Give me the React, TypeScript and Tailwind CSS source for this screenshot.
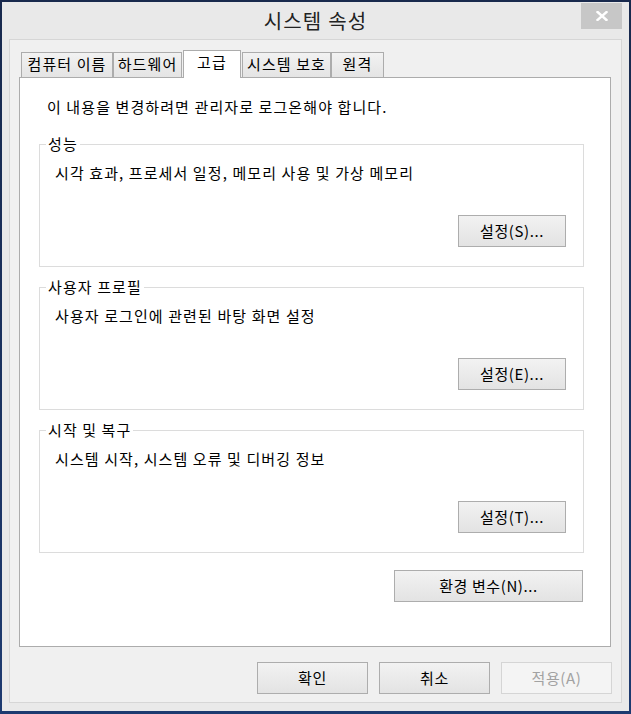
import React from "react";

function Btn({ label, w, disabled }: { label: string; w: string; disabled?: boolean }) {
  return (
    <button
      className={
        disabled
          ? `${w} h-[32px] border border-[#d5d5d5] bg-[#f4f4f4] text-[#a2a2a2] text-[15px] leading-[20px] tracking-[0.6px] flex items-center justify-center`
          : `${w} h-[32px] border border-[#adadad] bg-linear-to-b from-[#f2f2f2] to-[#e3e3e3] text-black text-[15px] leading-[20px] tracking-[0.6px] flex items-center justify-center`
      }
    >
      {label}
    </button>
  );
}

function Group({ title, text, button, className }: { title: string; text: string; button: string; className: string }) {
  return (
    <div className={`${className} w-[545px] h-[123px] border border-[#dcdcdc] flex flex-col`}>
      <div className="-mt-[11px] ml-[6px] w-fit bg-white px-[2px] h-[20px] leading-[20px] text-[15px] tracking-[1.1px]">{title}</div>
      <div className="mt-[9px] ml-[15px] h-[20px] leading-[20px] text-[15px] tracking-[1.1px]">{text}</div>
      <div className="mt-[32px] mr-[17px] self-end">
        <Btn label={button} w="w-[108px]" />
      </div>
    </div>
  );
}

export default function App() {
  const tabBase =
    "h-[25px] border-t border-l border-r border-[#acacac] bg-linear-to-b from-[#f2f2f2] to-[#e4e4e4] text-[15px] leading-[22px] tracking-[1.1px] flex justify-center text-black";
  return (
    <div className="w-[631px] h-[714px] bg-linear-to-b from-[#18294d] to-[#1d3a70] pt-[2px] pl-[2px] overflow-hidden font-['Noto_Sans_CJK_KR','Noto_Sans',sans-serif]">
      <div className="w-[627px] h-[709px] bg-[#e9e9e9] flex flex-col px-[7px]">
        {/* title bar */}
        <div className="h-[37px] grid grid-cols-[1fr_auto_1fr]">
          <div />
          <div className="text-[20px] leading-[38px] tracking-[1.2px] text-[#222222]">시스템 속성</div>
          <div className="justify-self-end pt-[1px]">
            <div className="w-[41px] h-[26px] bg-[#c7c7c7] flex items-center justify-center">
              <svg width="12" height="10" viewBox="0 0 12 10">
                <path d="M1.5 1 L10.5 9 M10.5 1 L1.5 9" stroke="#ffffff" strokeWidth="2.4" strokeLinecap="square" />
              </svg>
            </div>
          </div>
        </div>
        {/* client */}
        <div className="h-[664px] border border-[#d6d6d6] bg-[#f0f0f0] px-[9px] pt-[10px] flex flex-col">
          {/* tabs */}
          <div className="h-[27px] flex items-end">
            <div className={`${tabBase} ml-[2px] w-[92px]`}>컴퓨터 이름</div>
            <div className={`${tabBase} w-[69px]`}>하드웨어</div>
            <div className="ml-[1px] w-[58px] h-[28px] -mb-px relative z-10 border-t border-l border-r border-[#acacac] bg-white text-[15px] leading-[22px] tracking-[1.1px] flex justify-center">
              고급
            </div>
            <div className={`${tabBase} ml-[1px] w-[89px]`}>시스템 보호</div>
            <div className={`${tabBase} w-[53px]`}>원격</div>
          </div>
          {/* pane */}
          <div className="w-[592px] h-[570px] border border-[#acacac] bg-white pl-[19px] flex flex-col text-black">
            <div className="mt-[19px] ml-[8px] h-[20px] leading-[20px] text-[15px] tracking-[1.1px]">
              이 내용을 변경하려면 관리자로 로그온해야 합니다.
            </div>
            <Group className="mt-[27px]" title="성능" text="시각 효과, 프로세서 일정, 메모리 사용 및 가상 메모리" button="설정(S)..." />
            <Group className="mt-[20px]" title="사용자 프로필" text="사용자 로그인에 관련된 바탕 화면 설정" button="설정(E)..." />
            <Group className="mt-[20px]" title="시작 및 복구" text="시스템 시작, 시스템 오류 및 디버깅 정보" button="설정(T)..." />
            <div className="w-[545px] flex justify-end mt-[17px]">
              <div className="mr-[1px]">
                <Btn label="환경 변수(N)..." w="w-[189px]" />
              </div>
            </div>
          </div>
          {/* bottom buttons */}
          <div className="mt-[15px] flex justify-end gap-[11px]">
            <Btn label="확인" w="w-[111px]" />
            <Btn label="취소" w="w-[111px]" />
            <Btn label="적용(A)" w="w-[111px]" disabled />
          </div>
        </div>
      </div>
    </div>
  );
}
